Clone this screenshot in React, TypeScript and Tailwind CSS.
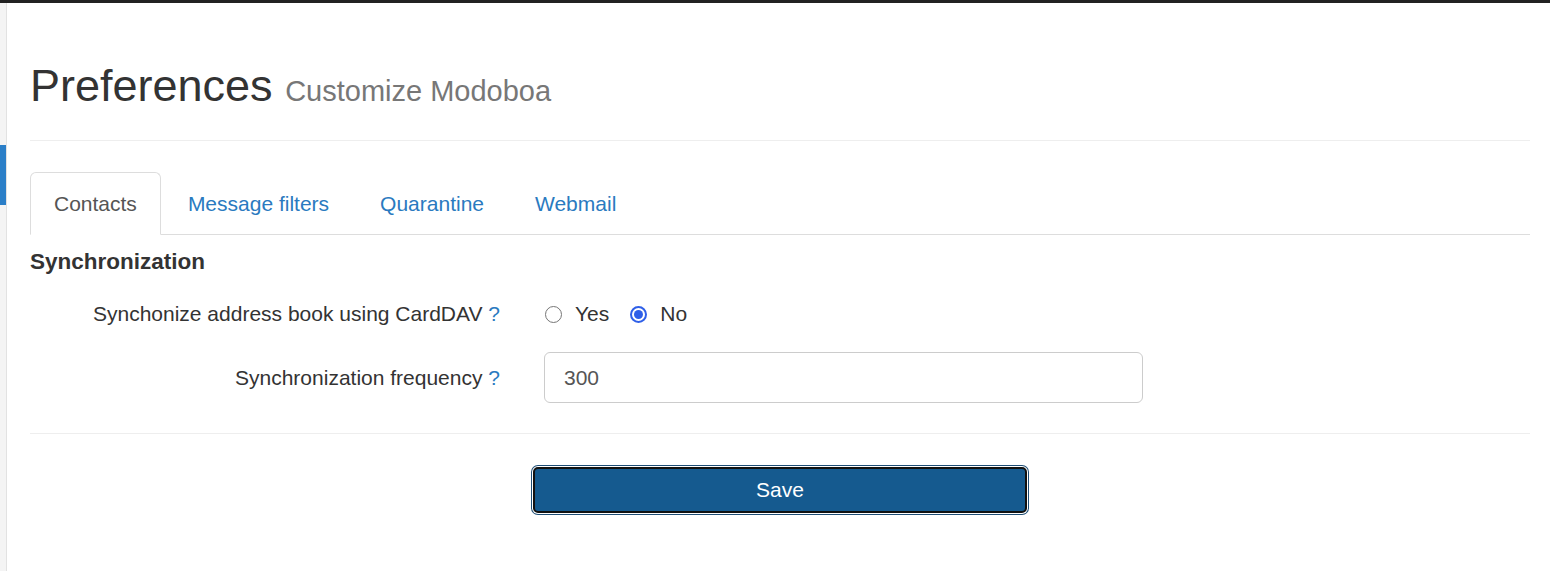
import { useState } from 'react';

const tabs = ['Contacts', 'Message filters', 'Quarantine', 'Webmail'];

function Radio({ checked, label, onClick }: { checked: boolean; label: string; onClick: () => void }) {
    return (
        <label className="flex items-center gap-[13px] cursor-pointer" onClick={onClick}>
            {checked ? (
                <span className="w-[17px] h-[17px] rounded-full border-2 border-[#2f5fe8] flex items-center justify-center">
                    <span className="w-[9px] h-[9px] rounded-full bg-[#2f5fe8]" />
                </span>
            ) : (
                <span className="w-[17px] h-[17px] rounded-full border-[1.5px] border-[#767676] bg-white" />
            )}
            <span>{label}</span>
        </label>
    );
}

export default function App() {
    const [sync, setSync] = useState(false);
    const [active, setActive] = useState(0);

    return (
        <div className="min-h-[571px] bg-white text-[#333] text-[21px] font-['Liberation_Sans',Arial,sans-serif]">
            <div className="h-[3px] bg-[#222]" />
            <div className="flex">
                {/* sidebar edge */}
                <div className="w-[7px] shrink-0 bg-[#f4f4f4] border-r border-[#e2e2e2] min-h-[568px]">
                    <div className="mt-[142px] h-[60px] w-[6px] bg-[#2b7fc8]" />
                </div>

                <main className="flex-1 pl-[23px] pr-[20px]">
                    <h1 className="mt-[58px] text-[45px] leading-[50px] font-normal">
                        Preferences <small className="text-[29px] text-[#777]">Customize Modoboa</small>
                    </h1>
                    <hr className="mt-[24px] border-t border-[#eee]" />

                    <ul className="mt-[31px] flex border-b border-[#ddd]">
                        {tabs.map((t, i) => (
                            <li key={t} className="mr-[3px] -mb-px">
                                <button
                                    onClick={() => setActive(i)}
                                    className={
                                        i === active
                                            ? 'px-[23px] py-[15px] leading-[31px] border border-[#ddd] border-b-white rounded-t-[6px] bg-white text-[#555]'
                                            : 'px-[23px] py-[15px] leading-[31px] border border-transparent text-[#2a7ac0]'
                                    }
                                >
                                    {t}
                                </button>
                            </li>
                        ))}
                    </ul>

                    <h4 className="mt-[12px] text-[22.5px] leading-[30px] font-bold">Synchronization</h4>

                    <div className="mt-[22px] flex items-center h-[30px]">
                        <div className="w-[470px] text-right">
                            Synchonize address book using CardDAV <span className="text-[#2a7ac0]">?</span>
                        </div>
                        <div className="ml-[45px] flex items-center gap-[21px]">
                            <Radio checked={sync} label="Yes" onClick={() => setSync(true)} />
                            <Radio checked={!sync} label="No" onClick={() => setSync(false)} />
                        </div>
                    </div>

                    <div className="mt-[23px] flex items-center">
                        <div className="w-[470px] text-right">
                            Synchronization frequency <span className="text-[#2a7ac0]">?</span>
                        </div>
                        <input
                            defaultValue="300"
                            className="ml-[44px] w-[599px] h-[51px] px-[19px] border border-[#ccc] rounded-[6px] text-[#555] outline-none"
                        />
                    </div>

                    <hr className="mt-[30px] border-t border-[#eee]" />

                    <div className="mt-[33px] flex justify-center">
                        <button className="w-[494px] h-[46px] rounded-[5px] bg-[#155a8f] border-2 border-[#111] text-white shadow-[0_0_0_1px_#fff,0_0_0_2px_#1d4d75]">
                            Save
                        </button>
                    </div>
                </main>
            </div>
        </div>
    );
}
